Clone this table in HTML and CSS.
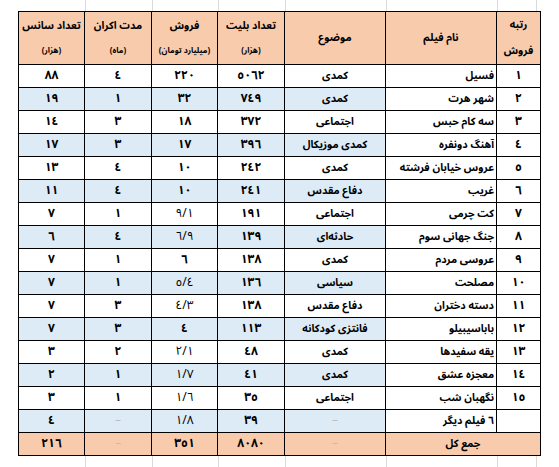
FILE: index.html
```html
<!DOCTYPE html>
<html lang="fa" dir="rtl">
<head>
<meta charset="utf-8">
<title>فروش فیلم‌ها</title>
<link rel="stylesheet" href="styles.css">
</head>
<body>
<div class="sheet">
  <table class="films">
    <colgroup>
      <col class="c-rank"><col class="c-name"><col class="c-genre"><col class="c-num"><col class="c-num2"><col class="c-num"><col class="c-num2">
    </colgroup>
    <thead>
      <tr>
        <th class="h-rank"><span class="hl">رتبه</span><span class="hl">فروش</span></th>
        <th>نام فیلم</th>
        <th>موضوع</th>
        <th><span class="hl">تعداد بلیت</span><span class="hs">(هزار)</span></th>
        <th><span class="hl">فروش</span><span class="hs">(میلیارد تومان)</span></th>
        <th><span class="hl">مدت اکران</span><span class="hs">(ماه)</span></th>
        <th><span class="hl">تعداد سانس</span><span class="hs">(هزار)</span></th>
      </tr>
    </thead>
    <tbody>
      <tr><td class="rank">١</td><td class="name">فسیل</td><td class="genre">کمدی</td><td>٥٠٦٢</td><td>٢٢٠</td><td>٤</td><td>٨٨</td></tr>
      <tr class="alt"><td class="rank">٢</td><td class="name">شهر هرت</td><td class="genre">کمدی</td><td>٧٤٩</td><td>٣٢</td><td>١</td><td>١٩</td></tr>
      <tr><td class="rank">٣</td><td class="name">سه کام حبس</td><td class="genre">اجتماعی</td><td>٣٧٢</td><td>١٨</td><td>٣</td><td>١٤</td></tr>
      <tr class="alt"><td class="rank">٤</td><td class="name">آهنگ دونفره</td><td class="genre">کمدی موزیکال</td><td>٣٩٦</td><td>١٧</td><td>٣</td><td>١٧</td></tr>
      <tr><td class="rank">٥</td><td class="name">عروس خیابان فرشته</td><td class="genre">کمدی</td><td>٢٤٢</td><td>١٠</td><td>٤</td><td>١٣</td></tr>
      <tr class="alt"><td class="rank">٦</td><td class="name">غریب</td><td class="genre">دفاع مقدس</td><td>٢٤١</td><td>١٠</td><td>٤</td><td>١١</td></tr>
      <tr><td class="rank">٧</td><td class="name">کت چرمی</td><td class="genre">اجتماعی</td><td>١٩١</td><td class="dec">٩/١</td><td>١</td><td>٧</td></tr>
      <tr class="alt"><td class="rank">٨</td><td class="name">جنگ جهانی سوم</td><td class="genre">حادثه‌ای</td><td>١٣٩</td><td class="dec">٦/٩</td><td>٤</td><td>٦</td></tr>
      <tr><td class="rank">٩</td><td class="name">عروسی مردم</td><td class="genre">کمدی</td><td>١٣٨</td><td>٦</td><td>١</td><td>٧</td></tr>
      <tr class="alt"><td class="rank">١٠</td><td class="name">مصلحت</td><td class="genre">سیاسی</td><td>١٣٦</td><td class="dec">٥/٤</td><td>١</td><td>٧</td></tr>
      <tr><td class="rank">١١</td><td class="name">دسته دختران</td><td class="genre">دفاع مقدس</td><td>١٣٨</td><td class="dec">٤/٣</td><td>٣</td><td>٧</td></tr>
      <tr class="alt"><td class="rank">١٢</td><td class="name">باباسیبیلو</td><td class="genre">فانتزی کودکانه</td><td>١١٣</td><td>٤</td><td>٣</td><td>٧</td></tr>
      <tr><td class="rank">١٣</td><td class="name">یقه سفیدها</td><td class="genre">کمدی</td><td>٤٨</td><td class="dec">٢/١</td><td>٢</td><td>٣</td></tr>
      <tr class="alt"><td class="rank">١٤</td><td class="name">معجزه عشق</td><td class="genre">کمدی</td><td>٤١</td><td class="dec">١/٧</td><td>١</td><td>٢</td></tr>
      <tr><td class="rank">١٥</td><td class="name">نگهبان شب</td><td class="genre">اجتماعی</td><td>٣٥</td><td class="dec">١/٦</td><td>١</td><td>٣</td></tr>
      <tr class="alt"><td class="rank"></td><td class="name">٦ فیلم دیگر</td><td class="dash">–</td><td>٣٩</td><td class="dec">١/٨</td><td class="dash">–</td><td>٤</td></tr>
      <tr class="total"><td colspan="2" class="genre">جمع کل</td><td class="dash">–</td><td>٨٠٨٠</td><td>٣٥١</td><td class="dash">–</td><td>٢١٦</td></tr>
    </tbody>
  </table>
</div>
</body>
</html>
```
FILE: styles.css
```css
html, body {
  margin: 0;
  padding: 0;
  background: #ffffff;
}

.sheet {
  width: 559px;
  height: 467px;
  box-sizing: border-box;
  padding: 11px 18px 0 0;
  direction: rtl;
  background-color: #ffffff;
  background-image:
    linear-gradient(#dadada, #dadada),
    linear-gradient(#dadada, #dadada),
    linear-gradient(#dadada, #dadada),
    linear-gradient(#dadada, #dadada),
    linear-gradient(#dadada, #dadada),
    linear-gradient(#dadada, #dadada),
    linear-gradient(#dadada, #dadada);
  background-repeat: no-repeat;
  background-size: 1px 100%;
  background-position: 85px 0, 152px 0, 218px 0, 285px 0, 386px 0, 497px 0, 536px 0;
}

.films {
  border-collapse: collapse;
  table-layout: fixed;
  width: 523px;
  font-family: "Noto Sans Arabic", "Noto Naskh Arabic", "DejaVu Sans", sans-serif;
  font-weight: bold;
  font-size: 12px;
  color: #000;
  background: #fff;
}

.c-rank { width: 44px; }
.c-name { width: 111px; }
.c-genre { width: 101px; }
.c-num { width: 67px; }
.c-num2 { width: 66px; }

.films th,
.films td {
  border: 1px solid #000;
  padding: 0;
  text-align: center;
  vertical-align: middle;
  white-space: nowrap;
  overflow: hidden;
}

.films thead tr {
  height: 53px;
}

.films th {
  background: #f8cbad;
  font-weight: bold;
  font-size: 10.5px;
}

.hl {
  display: block;
  line-height: 26px;
  font-size: 10.5px;
}

.hs {
  display: block;
  line-height: 24px;
  font-size: 8px;
}

.films tbody tr {
  height: 23px;
}

.films td {
  line-height: 20px;
}

.films td.name {
  text-align: right;
  padding-right: 2px;
  font-size: 10.5px;
}

.films td.genre {
  font-size: 10.5px;
}

.alt td {
  background: #ddebf7;
}

.alt td.name,
.alt td.rank {
  background: #fff;
}

.films td.dec {
  font-weight: normal;
}

.films td.dash {
  color: #bdbdbd;
  font-weight: normal;
}

.total td {
  background: #f8cbad;
}
```
